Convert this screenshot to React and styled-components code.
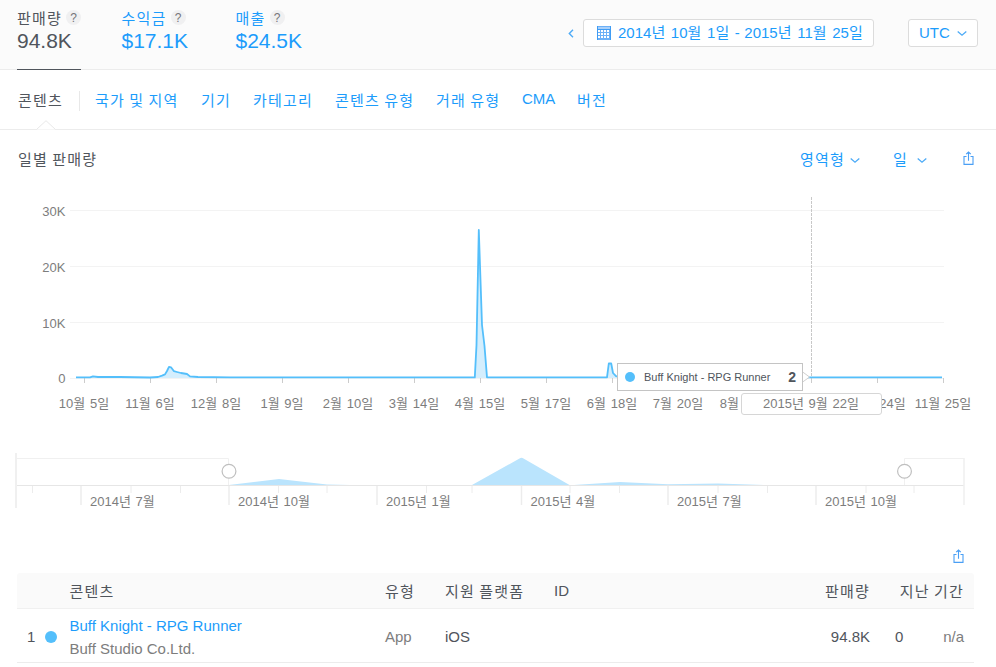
import React from 'react'
import styled, { createGlobalStyle } from 'styled-components'

const BLUE = '#1c9cfb'
const DARK = '#50555c'
const GREY = '#7d7d7d'

const GlobalStyle = createGlobalStyle`
  * {
    box-sizing: border-box;
  }
  body {
    margin: 0;
    background: #fff;
    color: ${DARK};
    font-family: "Liberation Sans", Arial, "Noto Sans CJK KR", sans-serif;
    font-size: 15px;
    line-height: 20px;
    overflow: hidden;
  }
`
const Page = styled.div`
  width: 996px;
  height: 667px;
  display: flex;
  flex-direction: column;
  overflow: hidden;
  white-space: nowrap;
`
const Hangul = styled.span`
  letter-spacing: 0.08em;
`
const TopBar = styled.header`
  display: flex;
  height: 70px;
  padding: 0 18px 0 17px;
  background: #fbfbfb;
  border-bottom: 1px solid #ececec;
`
const Metric = styled.div`
  display: flex;
  flex-direction: column;
  width: ${(p) => p.$width}px;
  margin-right: ${(p) => p.$gap}px;
  height: 70px;
  padding-top: 9px;
  color: ${(p) => (p.$active ? DARK : BLUE)};
  border-bottom: 1px solid ${(p) => (p.$active ? DARK : 'transparent')};
`
const MetricName = styled.div`
  display: flex;
  align-items: center;
  gap: 4px;
  height: 20px;
`
const Help = styled.span`
  width: 15px;
  height: 15px;
  margin-top: -3px;
  border-radius: 50%;
  background: #f0f0f1;
  color: #75757a;
  font-size: 12px;
  line-height: 16px;
  text-align: center;
`
const MetricValue = styled.div`
  margin-top: -1px;
  font-size: 21px;
  line-height: 26px;
`
const DateTools = styled.div`
  display: flex;
  align-items: center;
  height: 66px;
  margin-left: auto;
  color: ${BLUE};
`
const ToolButton = styled.div`
  display: flex;
  align-items: center;
  gap: ${(p) => p.$gap}px;
  width: ${(p) => p.$width}px;
  height: 28px;
  margin-left: ${(p) => p.$left}px;
  padding-left: ${(p) => p.$pad}px;
  background: #fff;
  border: 1px solid #dcdcdc;
  border-radius: 3px;
`
const Range = styled.span`
  word-spacing: 0.3px;
`
const Tabs = styled.nav`
  display: flex;
  position: relative;
  height: 60px;
  padding: 21px 0 0 18px;
  border-bottom: 1px solid #ececec;
`
const Tab = styled.div`
  width: ${(p) => p.$width}px;
  color: ${(p) => (p.$active ? DARK : BLUE)};
  margin-top: ${(p) => (p.$latin ? -2 : 0)}px;
`
const Divider = styled.div`
  width: 1px;
  height: 20px;
  margin-right: 15px;
  background: #e8e8e8;
`
const Notch = styled.svg`
  position: absolute;
  left: 36px;
  top: 50px;
`
const ChartHeader = styled.div`
  display: flex;
  align-items: center;
  height: 60px;
  padding: 0 22px 0 18px;
`
const Title = styled.h1`
  flex: 1;
  margin: 0;
  font-size: 15px;
  font-weight: normal;
`
const Choice = styled.div`
  display: flex;
  align-items: center;
  gap: ${(p) => p.$gap}px;
  margin-right: ${(p) => p.$right}px;
  color: ${BLUE};
`
const ShareIcon = styled.svg`
  flex: none;
  margin-bottom: ${(p) => p.$lift || 0}px;
`
const ChartArea = styled.div`
  position: relative;
  height: 255px;
`
const Graphic = styled.svg`
  display: block;
  font-size: 13px;
  fill: ${GREY};
`
const Tooltip = styled.div`
  position: absolute;
  left: 617px;
  top: 173px;
  width: 186px;
  height: 28px;
  display: flex;
  align-items: center;
  padding: 0 6px 1px 7px;
  background: #fff;
  border: 1px solid #c4c4c4;
  font-size: 11px;
`
const Dot = styled.span`
  width: ${(p) => p.$size}px;
  height: ${(p) => p.$size}px;
  border-radius: 50%;
  background: #54bffb;
`
const TooltipName = styled.span`
  margin-left: 9px;
`
const TooltipCount = styled.b`
  margin-left: auto;
  font-size: 14px;
`
const DateFlag = styled.div`
  position: absolute;
  left: 741px;
  top: 203px;
  width: 141px;
  height: 22px;
  background: #fff;
  border: 1px solid #d6d6d6;
  border-radius: 3px;
  color: ${GREY};
  font-size: 13px;
  line-height: 20px;
  text-align: center;
`
const TableTools = styled.div`
  display: flex;
  align-items: center;
  justify-content: flex-end;
  height: 53px;
  padding: 19px 32px 0 0;
`
const Table = styled.div`
  width: 957px;
  margin-left: 17px;
`
const Row = styled.div`
  display: grid;
  grid-template-columns: 52.5px 315.5px 60px 109px 100px 1fr 94px;
  align-items: center;
  height: ${(p) => (p.$head ? 36 : 54)}px;
  padding: 2px 10px 0 0;
  background: ${(p) => (p.$head ? '#fafafa' : '#fff')};
  border-bottom: 1px solid ${(p) => (p.$head ? '#f0f0f0' : '#ececec')};
  border-radius: ${(p) => (p.$head ? '3px 3px 0 0' : 0)};
`
const Cell = styled.div`
  margin-top: ${(p) => (p.$latin ? -2 : 0)}px;
  text-align: ${(p) => (p.$right ? 'right' : 'left')};
  color: ${(p) => (p.$muted ? GREY : 'inherit')};
`
const Rank = styled.div`
  display: flex;
  align-items: center;
  gap: 10px;
  padding-left: 10px;
`
const Product = styled.div`
  line-height: 23px;
  color: ${BLUE};
`
const Studio = styled.div`
  color: ${GREY};
`
const Previous = styled.div`
  display: flex;
  justify-content: space-between;
  padding-left: 25px;
`

const split = (text) => text.split(/([\uac00-\ud7a3]+)/).filter(Boolean)
const isHangul = (s) => /[\uac00-\ud7a3]/.test(s)

const Text = ({ children }) =>
  split(children).map((s, i) => (isHangul(s) ? <Hangul key={i}>{s}</Hangul> : s))

const SvgText = ({ children, ...rest }) => (
  <text {...rest}>
    {split(children).map((s, i) => (
      <tspan key={i} letterSpacing={isHangul(s) ? '0.08em' : 0}>{s}</tspan>
    ))}
  </text>
)

const Chevron = () => (
  <svg width="10" height="7" viewBox="0 0 10 7" fill="none" stroke="#4dabf7" strokeWidth="1.3">
    <path d="M0.7 1.5 L5 5.2 L9.3 1.5" />
  </svg>
)
const Back = () => (
  <svg width="6" height="9" viewBox="0 0 6 9" fill="none" stroke="#4dabf7" strokeWidth="1.4">
    <path d="M5 0.8 L1.3 4.5 L5 8.2" />
  </svg>
)
const Share = ({ lift }) => (
  <ShareIcon $lift={lift} width="11" height="15" viewBox="0 0 11 15" fill="none" stroke="#4a9ff5" strokeWidth="1.1">
    <path d="M3.5 5.5 H1 V13.4 H10 V5.5 H7.5 M5.5 9.8 V1.2 M3.2 3.2 L5.5 1 L7.8 3.2" />
  </ShareIcon>
)
const Calendar = () => (
  <svg width="14" height="14" viewBox="0 0 14 14">
    <rect width="14" height="14" fill="#6cb0f7" />
    <rect x="1" y="1" width="12" height="2" fill="#a9d0fa" />
    {[4, 7, 10].map((y) =>
      [1, 4, 7, 10].map((x) => <rect key={x + '-' + y} x={x} y={y} width="2" height="2" fill="#fff" />)
    )}
    <path d="M0 3.5 H14 M0.5 0 V14 M13.5 0 V14" stroke="#3f9cf4" />
  </svg>
)

// the day under the cursor has an empty label, its date stands in the flag
const days = ['10월 5일', '11월 6일', '12월 8일', '1월 9일', '2월 10일', '3월 14일', '4월 15일',
  '5월 17일', '6월 18일', '7월 20일', '8월 21일', '', '10월 24일', '11월 25일']
const levels = [['30K', 210.5], ['20K', 266.5], ['10K', 322.5], ['0', 378]]

const LINE = 'M76 377.4 H90 L93 376.4 L98 377 L120 377 L150 377.5 L158 377 L162 375.6 L165 374.4 L167 371 L169 366.8 L171 367.3 L174 371.2 L177 372 L181 373 L187 374 L190 376.4 L198 377 L230 377.4 H474.8 L476.5 345 L478.8 230 L482 325 L484.5 346 L487 377.4 H607 L608.8 363.5 H611.2 L613 373 L616 376.2 L622 377.4 H942'

const SalesChart = () => (
  <ChartArea>
    <Graphic width="996" height="255" viewBox="0 190 996 255">
      {levels.map(([name, y]) => (
        <g key={name}>
          <path d={`M70 ${Math.floor(y) + 0.5} H944`} stroke="#f3f3f3" />
          <text x="65.5" y={y + 5} textAnchor="end">{name}</text>
        </g>
      ))}
      {days.map((d, i) => {
        const x = Math.floor(84.5 + i * 66.05)
        return (
          <g key={i}>
            <path d={`M${x + 0.5} 378 V383`} stroke="#ccc" />
            {d && <SvgText x={x + 0.5} y="408" textAnchor="middle">{d}</SvgText>}
          </g>
        )
      })}
      <path d={LINE + ' V378 H76 Z'} fill="#d4eefd" />
      <path d="M811.5 197 V377" stroke="#c8c8c8" strokeDasharray="3 1" />
      <path d={LINE} fill="none" stroke="#54bffb" strokeWidth="1.8" strokeLinejoin="round" />
      <path d="M802 371.5 L809.5 377 L802 382.5" fill="#fff" stroke="#d0d0d0" />
    </Graphic>
    <Tooltip>
      <Dot $size={10} />
      <TooltipName>Buff Knight - RPG Runner</TooltipName>
      <TooltipCount>2</TooltipCount>
    </Tooltip>
    <DateFlag><Text>2015년 9월 22일</Text></DateFlag>
  </ChartArea>
)

const quarters = [['2014년 7월', 81], ['2014년 10월', 229], ['2015년 1월', 377],
  ['2015년 4월', 521.5], ['2015년 7월', 668], ['2015년 10월', 816]]
const months = [32.5, 131, 180.5, 278.5, 327, 426.5, 472, 570, 619.5, 718, 767.5, 866, 914]

const RangeChart = () => (
  <Graphic width="996" height="75" viewBox="0 445 996 75">
    <path d="M229 485 L279 479 L327 484.6 L350 485 Z M472 485 L519.5 458.5 Q521.5 457 523.5 458.5 L569.5 485 Z M574 485 L620 482 L668 484.3 L718 483.6 L765 485 Z" fill="#bae4fd" />
    <g fill="none" stroke="#ececec">
      <path d="M17 485.5 H964" stroke="#e6e6e6" />
      <path d="M17 458.5 H228.5 V485 M904.5 485 V458.5 H964" stroke="#f0f0f0" />
      <path d="M16 453 V508" strokeWidth="2" stroke="#f0f0f0" />
      <path d="M964 458 V505" strokeWidth="1.6" stroke="#f0f0f0" />
      {months.map((x) => <path key={x} d={`M${x} 486 V493`} />)}
      {quarters.map(([name, x]) => <path key={name} d={`M${x} 486 V505`} strokeWidth="1.5" />)}
    </g>
    {quarters.map(([name, x]) => <SvgText key={name} x={x + 9} y="506">{name}</SvgText>)}
    {[229, 904.5].map((x) => (
      <circle key={x} cx={x} cy="471.3" r="6.9" fill="#fff" stroke="#bfbfbf" strokeWidth="1.2" />
    ))}
  </Graphic>
)

const App = () => {
  return (
    <Page>
      <GlobalStyle />
      <TopBar>
        <Metric $active $width={64} $gap={40.5}>
          <MetricName><Text>판매량</Text><Help>?</Help></MetricName>
          <MetricValue>94.8K</MetricValue>
        </Metric>
        <Metric $width={64} $gap={50}>
          <MetricName><Text>수익금</Text><Help>?</Help></MetricName>
          <MetricValue>$17.1K</MetricValue>
        </Metric>
        <Metric $width={70} $gap={0}>
          <MetricName><Text>매출</Text><Help>?</Help></MetricName>
          <MetricValue>$24.5K</MetricValue>
        </Metric>
        <DateTools>
          <Back />
          <ToolButton $width={291} $left={9} $pad={13} $gap={7}>
            <Calendar />
            <Range><Text>2014년 10월 1일 - 2015년 11월 25일</Text></Range>
          </ToolButton>
          <ToolButton $width={70} $left={34} $pad={10} $gap={7}>
            UTC <Chevron />
          </ToolButton>
        </DateTools>
      </TopBar>
      <Tabs>
        <Tab $active $width={61}><Text>콘텐츠</Text></Tab>
        <Divider />
        <Tab $width={106}><Text>국가 및 지역</Text></Tab>
        <Tab $width={52}><Text>기기</Text></Tab>
        <Tab $width={82}><Text>카테고리</Text></Tab>
        <Tab $width={101}><Text>콘텐츠 유형</Text></Tab>
        <Tab $width={86}><Text>거래 유형</Text></Tab>
        <Tab $latin $width={55}>CMA</Tab>
        <Tab $width={40}><Text>버전</Text></Tab>
        <Notch width="20" height="10" viewBox="0 0 20 10" fill="#fff" stroke="#e8e8e8">
          <path d="M0.5 9.5 L10 0.7 L19.5 9.5" />
        </Notch>
      </Tabs>
      <ChartHeader>
        <Title><Text>일별 판매량</Text></Title>
        <Choice $gap={5} $right={33}><Text>영역형</Text><Chevron /></Choice>
        <Choice $gap={9} $right={36}><Text>일</Text><Chevron /></Choice>
        <Share lift={4} />
      </ChartHeader>
      <SalesChart />
      <RangeChart />
      <TableTools><Share /></TableTools>
      <Table>
        <Row $head>
          <Cell />
          <Cell><Text>콘텐츠</Text></Cell>
          <Cell><Text>유형</Text></Cell>
          <Cell><Text>지원 플랫폼</Text></Cell>
          <Cell $latin>ID</Cell>
          <Cell $right><Text>판매량</Text></Cell>
          <Cell $right><Text>지난 기간</Text></Cell>
        </Row>
        <Row>
          <Rank>1<Dot $size={12} /></Rank>
          <Product>
            Buff Knight - RPG Runner
            <Studio>Buff Studio Co.Ltd.</Studio>
          </Product>
          <Cell $muted>App</Cell>
          <Cell>iOS</Cell>
          <Cell />
          <Cell $right>94.8K</Cell>
          <Previous>0<Cell $muted>n/a</Cell></Previous>
        </Row>
      </Table>
    </Page>
  )
}

export default App
